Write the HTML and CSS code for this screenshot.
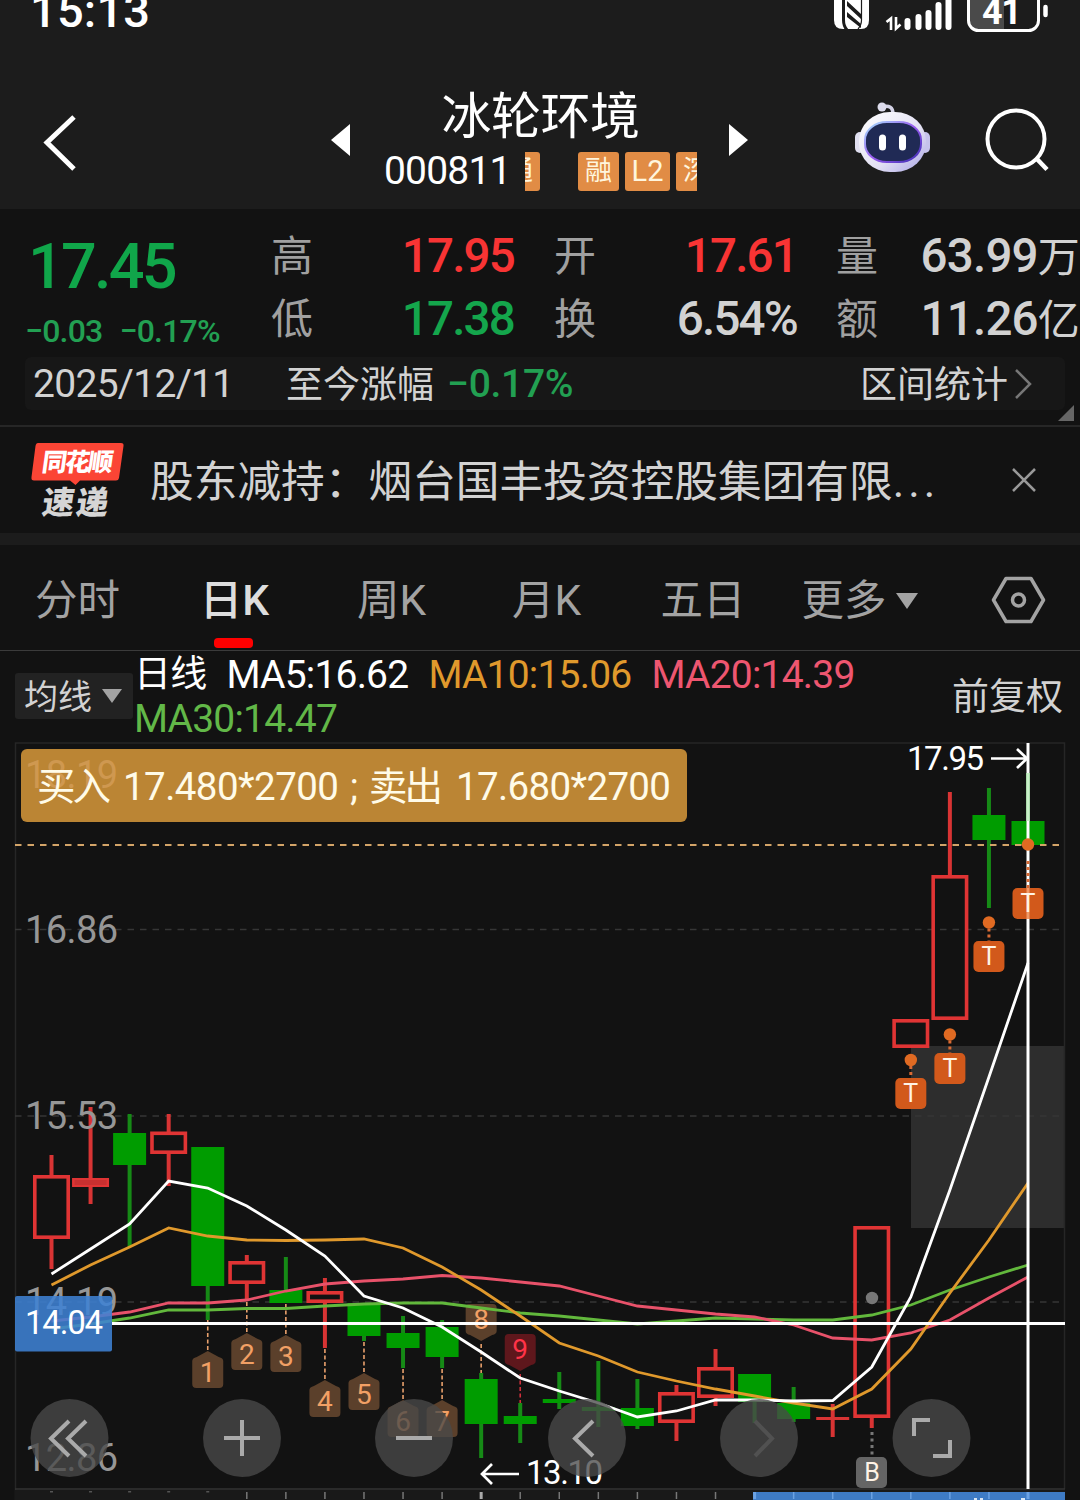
FILE: index.html
```html
<!DOCTYPE html>
<html lang="zh-CN">
<head>
    <meta charset="UTF-8">
    <meta name="viewport" content="width=device-width, initial-scale=1.0">
    <title>冰轮环境 000811</title>
    <link rel="stylesheet" href="styles.css">
</head>
<body>
    <div class="statusbar">
        <span class="clock">15:13</span>
        <svg class="status-icons" width="220" height="36" viewBox="830 0 220 36">
            <path d="M834 0V20Q834 29 843 29H861Q869 29 869 20V0Z" fill="#fff"/>
            <path d="M843.500 -2V20Q843.500 26 847 30" stroke="#1c1c1c" stroke-width="3" fill="none"/>
            <path d="M847 1L861 14V19L847 6ZM847 12L861 24V28L847 17Z" fill="#1c1c1c"/>
            <path d="M861.500 0V20Q861.500 25 858 29" stroke="#1c1c1c" stroke-width="1.200" fill="none"/>
            <path d="M886.500 22L891 18.500V30M896 17V28.500L900.500 24.500" stroke="#fff" stroke-width="2.600" fill="none"/>
            <path d="M907.500 21V27M918.500 17V27M928.500 13V27M938.500 5V27M948.500 -5V27" stroke="#fff" stroke-width="6" stroke-linecap="round"/>
            <path d="M969 0H1004V30H977Q969 30 969 21Z" fill="#4a4a4a"/>
            <rect x="968.500" y="-16" width="70" height="46.500" rx="10" fill="none" stroke="#fff" stroke-width="3"/>
            <path d="M1045.500 7V15" stroke="#fff" stroke-width="4.500" stroke-linecap="round"/>
            <text x="982" y="24" class="battery" textLength="40">41</text>
        </svg>
    </div>

    <header>
        <svg class="back" width="40" height="64" viewBox="40 110 40 64">
            <path d="M74 117L47 142.500L74 169" fill="none" stroke="#fff" stroke-width="5"/>
        </svg>
        <span class="prev"></span>
        <div class="stock">
            <h1>冰轮环境</h1>
            <div class="code">
                <span class="number">000811</span>
                <div class="tags">
                    <span class="tag tag-left">通</span>
                    <span class="tag">融</span>
                    <span class="tag tag-l2">L2</span>
                    <span class="tag">深</span>
                </div>
            </div>
        </div>
        <span class="next"></span>
        <svg class="robot" width="76" height="72" viewBox="854 101 76 72">
            <defs>
                <linearGradient id="shell" x1="0" y1="0" x2="1" y2="1">
                    <stop offset="0" stop-color="#fff"/>
                    <stop offset=".6" stop-color="#e2e0f3"/>
                    <stop offset="1" stop-color="#a9a4e6"/>
                </linearGradient>
                <linearGradient id="rim" x1="0" y1="0" x2="1" y2="1">
                    <stop offset="0" stop-color="#a7e4ff"/>
                    <stop offset=".5" stop-color="#9a5cf0"/>
                    <stop offset="1" stop-color="#3a2bb0"/>
                </linearGradient>
            </defs>
            <path d="M882 107Q893 104 893 114" fill="none" stroke="#d4d3e6" stroke-width="3.500"/>
            <circle cx="882" cy="107" r="4.500" fill="#dddced"/>
            <rect x="855" y="132" width="10" height="21" rx="5" fill="#e0dff0"/>
            <rect x="920" y="132" width="10" height="21" rx="5" fill="#c6c3ec"/>
            <rect x="859" y="112" width="67" height="60" rx="31" ry="29" fill="url(#shell)"/>
            <rect x="865" y="122" width="56" height="40" rx="22" ry="18" fill="#202a55" stroke="url(#rim)" stroke-width="2"/>
            <rect x="879" y="134.500" width="7" height="16" rx="3.500" fill="#fff"/>
            <rect x="899" y="134.500" width="7" height="16" rx="3.500" fill="#fff"/>
        </svg>
        <svg class="search" width="66" height="66" viewBox="984 106 66 66">
            <circle cx="1016" cy="138" r="28.500" fill="none" stroke="#fff" stroke-width="4"/>
            <path d="M1036 157L1047 168.500" stroke="#fff" stroke-width="4.500"/>
        </svg>
    </header>

    <section class="quote">
        <div class="quote-top">
            <div class="price-box">
                <div class="price">17.45</div>
                <div class="change"><span>−0.03</span><span>−0.17%</span></div>
            </div>
            <div class="stats">
                <span class="label">高</span><span class="value red">17.95</span>
                <span class="label">开</span><span class="value red">17.61</span>
                <span class="label">量</span><span class="value wide">63.99<i>万</i></span>
                <span class="label">低</span><span class="value green">17.38</span>
                <span class="label">换</span><span class="value">6.54%</span>
                <span class="label">额</span><span class="value wide">11.26<i>亿</i></span>
            </div>
        </div>
        <div class="range">
            <span class="date">2025/12/11</span>
            <span class="since">至今涨幅</span>
            <span class="since-value">−0.17%</span>
            <span class="range-link">区间统计</span>
            <svg width="20" height="32" viewBox="0 0 20 32"><path d="M2 2L16 16L2 30" fill="none" stroke="#777" stroke-width="2.500"/></svg>
        </div>
        <span class="corner"></span>
    </section>

    <section class="news">
        <svg class="news-logo" width="96" height="80" viewBox="30 440 96 80">
            <path d="M38 443H121Q124 443 123.500 446L119 478Q118.500 480.500 116 480.500H80L75.500 485L70 480.500H34Q31 480.500 31.500 477L35.500 446Q36 443 38 443Z" fill="#fb4535"/>
            <text transform="translate(41 471) skewX(-8)" class="logo-top" textLength="71">同花顺</text>
            <text transform="translate(41 514) skewX(-8)" class="logo-bottom" textLength="66">速递</text>
        </svg>
        <p>股东减持：烟台国丰投资控股集团有限<span class="dots">...</span></p>
        <svg class="close" width="28" height="28" viewBox="0 0 28 28"><path d="M3 3L25 25M25 3L3 25" stroke="#999" stroke-width="2.500"/></svg>
    </section>

    <nav>
        <a>分时</a>
        <a class="active">日K</a>
        <a>周K</a>
        <a>月K</a>
        <a>五日</a>
        <a class="more">更多</a>
        <svg width="56" height="50" viewBox="990 575 56 50">
            <path d="M1006 578.500H1031L1043.500 600L1031 621.500H1006L993.500 600Z" fill="none" stroke="#a3a3a3" stroke-width="3.500" stroke-linejoin="round"/>
            <circle cx="1018.500" cy="600" r="6" fill="none" stroke="#a3a3a3" stroke-width="3.500"/>
        </svg>
    </nav>

    <section class="averages">
        <span class="ma-button"><span>均线</span></span>
        <div class="ma-list">
            <span class="ma-name">日线</span>
            <span class="ma5">MA5:16.62</span>
            <span class="ma10">MA10:15.06</span>
            <span class="ma20">MA20:14.39</span>
            <span class="ma30">MA30:14.47</span>
        </div>
        <span class="adjust">前复权</span>
    </section>

    <svg id="chart" width="1080" height="758" viewBox="0 742 1080 758"></svg>

    <script>
        const step = 39.06;
        const firstX = 51.5;

        // type, high, body top, body bottom, low
        const candles = [
            ['r', 1155, 1175, 1239, 1269], ['r', 1107, 1178, 1187, 1204], ['g', 1114, 1133, 1165, 1247],
            ['r', 1114, 1131.5, 1154, 1186], ['g', 1147, 1147, 1286, 1320], ['r', 1255, 1261, 1284, 1300],
            ['g', 1257, 1290, 1303, 1303], ['r', 1278, 1291, 1303, 1348], ['g', 1303, 1303, 1336, 1341],
            ['g', 1316, 1333, 1348, 1368], ['g', 1320, 1327, 1357, 1368], ['g', 1373, 1379, 1424, 1458],
            ['g', 1403, 1416, 1424, 1443], ['g', 1372, 1399, 1403, 1409], ['g', 1361, 1407, 1411, 1427],
            ['g', 1379, 1408, 1426, 1429], ['r', 1385, 1392, 1423, 1441], ['r', 1349, 1367, 1398, 1406],
            ['g', 1374, 1374, 1402, 1423], ['g', 1387, 1403, 1419, 1422], ['r', 1404, 1417, 1420, 1437],
            ['r', 1226, 1226, 1418, 1428], ['r', 1019, 1019, 1048, 1048], ['r', 792, 875, 1020, 1020],
            ['g', 788, 815, 840, 908], ['g', 773, 821, 845, 845]
        ];

        const lines = {
            '#ffffff': [1274, 1249, 1224, 1181, 1188, 1206, 1230, 1256, 1296, 1308, 1327, 1352, 1378, 1391, 1403, 1417, 1411, 1400, 1400, 1401, 1400.5, 1367, 1297, 1190, 1077, 963],
            '#e0992c': [1285, 1265, 1247, 1228, 1236, 1240, 1240.5, 1240, 1239, 1248, 1267, 1290, 1316, 1343, 1356, 1372, 1381, 1389, 1396, 1403, 1409, 1389, 1349, 1293, 1240, 1183],
            '#e8526a': [1321, 1317, 1312, 1303, 1303, 1300, 1291, 1284, 1281, 1279, 1275.5, 1278, 1282, 1286, 1296, 1306, 1310, 1314, 1317, 1325, 1338, 1340, 1333, 1320, 1298, 1277],
            '#62b83c': [1329, 1324, 1318, 1310, 1310, 1308.5, 1308.5, 1306, 1304, 1303, 1303, 1308, 1313, 1316, 1320, 1324, 1321, 1318, 1319, 1320, 1320, 1315, 1305, 1290, 1277, 1265]
        };

        const xAt = i => firstX + step * i;
        let out = '';

        function line(x1, y1, x2, y2, color, width, dash) {
            out += `<path d="M${x1} ${y1}L${x2} ${y2}" stroke="${color}" stroke-width="${width}"${dash ? ` stroke-dasharray="${dash}"` : ''}/>`;
        }

        function rect(x, y, w, h, fill, rx) {
            out += `<rect x="${x}" y="${y}" width="${w}" height="${h}" rx="${rx || 0}" fill="${fill}"/>`;
        }

        function text(x, y, value, cls, length) {
            out += `<text x="${x}" y="${y}" class="${cls}"${length ? ` textLength="${length}"` : ''}>${value}</text>`;
        }

        // grid
        rect(911, 1046, 154, 182, '#2d2d2d');
        out += '<path d="M15.500 1500V743H1064.500V1489" fill="none" stroke="#262626" stroke-width="1.500"/>';
        line(15, 1489, 1065, 1489, '#333', 1.5);
        rect(15, 1490, 1050, 10, '#191919');
        [929.5, 1116, 1302].forEach(y => line(15, y, 1062, y, '#363636', 1.5, '6.500 6'));

        // candles
        candles.forEach(([type, high, top, bottom, low], i) => {
            const x = xAt(i);
            if (type === 'g') {
                line(x, high, x, low, '#168a16', 4);
                rect(x - 16.5, top, 33, bottom - top, '#009c00');
            } else {
                if (high < top) line(x, high, x, top + 1, '#d83434', 4);
                if (low > bottom) line(x, bottom - 1, x, low, '#d83434', 4);
                if (bottom - top < 5) {
                    rect(x - 16.5, top, 33, bottom - top, '#d83434');
                } else {
                    out += `<rect x="${x - 16.7}" y="${top + 1.8}" width="33.400" height="${bottom - top - 3.6}" fill="none" stroke="#e03434" stroke-width="3.600"/>`;
                }
            }
        });
        // second candle is nearly flat, its body is closed
        rect(xAt(1) - 16, 1180, 32, 5, '#c83030');

        text(25, 943, '16.86', 'axis', 93);
        text(25, 1129, '15.53', 'axis', 93);
        text(25, 1315, '14.19', 'axis', 93);
        text(25, 1471, '12.86', 'axis', 93);

        line(15, 845, 1062, 845, '#d3a468', 2, '6.500 6');

        // numbered signals: number, index, tip y, start y of the dashes
        [[1, 4, 1351, 1320], [2, 5, 1333, 1302], [3, 6, 1335, 1304], [4, 7, 1380, 1349], [5, 8, 1373, 1342], [6, 9, 1400, 1369], [7, 10, 1400, 1369]].forEach(([n, i, y, from]) => {
            const x = xAt(i);
            line(x, from, x, y, '#e8a06c', 1.6, '4 2.500');
            out += `<path d="M${x} ${y}L${x + 11} ${y + 6}Q${x + 15.5} ${y + 7} ${x + 15.5} ${y + 10}V${y + 33}Q${x + 15.5} ${y + 37} ${x + 11.5} ${y + 37}H${x - 11.5}Q${x - 15.5} ${y + 37} ${x - 15.5} ${y + 33}V${y + 10}Q${x - 15.5} ${y + 7} ${x - 11} ${y + 6}Z" fill="#5b402b"/>`;
            text(x, y + 31, n, 'signal');
        });
        [[8, 11, 1341, 1373, '#5b402b', '#e8a06c', 'signal'], [9, 12, 1371, 1403, '#5e171c', '#d0303c', 'signal nine']].forEach(([n, i, y, to, fill, stroke, cls]) => {
            const x = xAt(i);
            line(x, y + 3, x, to, stroke, 1.6, '4 2.500');
            out += `<path d="M${x} ${y}L${x + 11} ${y - 6}Q${x + 15.5} ${y - 7} ${x + 15.5} ${y - 10}V${y - 33}Q${x + 15.5} ${y - 37} ${x + 11.5} ${y - 37}H${x - 11.5}Q${x - 15.5} ${y - 37} ${x - 15.5} ${y - 33}V${y - 10}Q${x - 15.5} ${y - 7} ${x - 11} ${y - 6}Z" fill="${fill}"/>`;
            text(x, y - 12, n, cls);
        });

        // moving averages
        Object.entries(lines).reverse().forEach(([color, ys]) => {
            out += `<polyline points="${ys.map((y, i) => xAt(i) + ',' + y).join(' ')}" fill="none" stroke="${color}" stroke-width="2.800"/>`;
        });

        // crosshair
        line(1028, 743, 1028, 1489, '#fff', 3);
        line(112, 1323.5, 1065, 1323.5, '#fff', 3);
        line(1028, 773, 1028, 821, '#c9f0c9', 3);

        // trade marks
        [[22, 1060, 1078], [23, 1034.5, 1053], [24, 922.5, 941], [25, 844.5, 888]].forEach(([i, dot, y]) => {
            const x = xAt(i);
            out += `<circle cx="${x}" cy="${dot}" r="6.200" fill="#e06a22"/>`;
            line(x, i === 25 ? 861 : dot + 6, x, y, '#d86a34', 3, '3 3');
            rect(x - 15.5, y, 31, 31, '#d2591b', 5);
            if (i === 25) line(x, y, x, y + 31, '#f09a68', 3);
            text(x, y + 24, 'T', 'mark');
        });
        out += '<circle cx="872" cy="1298" r="6.200" fill="#777"/>';
        line(872, 1432, 872, 1457, '#777', 3, '3 3.500');
        rect(856, 1457, 31, 31, '#656565', 5);
        text(872, 1481, 'B', 'mark');

        text(907, 770, '17.95', 'extreme', 77);
        out += '<path d="M991 758.500H1027M1017 749L1027 758.500L1017 768M519 1474H482M492 1464L482 1474L492 1484" fill="none" stroke="#fff" stroke-width="2.700"/>';
        text(526, 1484, '13.10', 'extreme', 77);

        // price tag
        out += '<rect x="15" y="1296" width="97" height="55.500" rx="2" fill="#3e82d4" fill-opacity=".87"/>';
        text(25, 1334, '14.04', 'extreme', 78);

        // toolbar circles
        [69.5, 242, 414, 587, 759, 931.5].forEach(x => {
            out += `<circle cx="${x}" cy="1438" r="39" fill="#494949" fill-opacity=".78"/>`;
        });
        out += '<g fill="none" stroke="#aaa" stroke-width="4">'
            + '<path d="M69 1421L51 1438.500L69 1456M86 1421L68 1438.500L86 1456"/>'
            + '<path d="M224 1438H260M242 1420V1456M396 1438H432"/>'
            + '<path d="M593 1421L575 1438.500L593 1456"/>'
            + '<path d="M914 1436V1420H930M950 1440V1456H933"/>'
            + '<path d="M755 1421L772 1438.500L755 1456" stroke="#515151"/></g>';

        // time axis
        for (let i = 0; i < 26; i++) {
            const x = xAt(i);
            if (i < 5) line(x, 1491, x, 1492.5, '#555', 3);
            else line(x, 1492, x, 1499, i === 11 ? '#aaa' : '#777', i === 11 ? 3 : 1.5);
        }
        rect(753, 1492, 312, 8, '#3e7bc5');
        for (let i = 18; i < 26; i++) line(xAt(i), 1492, xAt(i), 1499, '#6ba2e4', i === 18 || i === 25 ? 3 : 1.5);
        rect(974, 1498, 3, 2, '#d9e6f5');
        rect(980, 1498, 3, 2, '#d9e6f5');
        rect(1021, 1498, 4, 2, '#d9e6f5');

        // order tooltip
        out += '<rect x="21" y="749" width="666" height="73" rx="6" fill="#bb8534"/>';
        text(25, 788, '18.19', 'axis axis-under', 93);
        text(37, 800, '买入', 'tip', 74);
        text(123, 800, '17.480*2700', 'tip', 216);
        text(350, 800, ';', 'tip');
        text(369, 800, '卖出', 'tip', 74);
        text(456, 800, '17.680*2700', 'tip', 215);

        document.getElementById('chart').innerHTML = out;
    </script>
</body>
</html>
```
FILE: styles.css
```css
body {
    font-family: Roboto, "Noto Sans CJK SC", sans-serif;
    margin: 0;
    width: 1080px;
    height: 1500px;
    overflow: hidden;
    background-color: #121212;
    color: #d2d2d2;
}

h1, p {
    margin: 0;
    font-weight: normal;
}

svg {
    display: block;
    flex: none;
}

.statusbar {
    display: flex;
    justify-content: space-between;
    height: 70px;
    padding: 0 30px;
    background-color: #1c1c1c;
    color: #fff;
}

.clock {
    font-size: 47px;
    font-weight: 500;
    line-height: 54px;
    letter-spacing: 0.2px;
    margin-top: -16px;
}

.battery {
    font-size: 36px;
    font-weight: bold;
    fill: #fff;
}

header {
    display: flex;
    align-items: center;
    height: 139px;
    background-color: #1c1c1c;
    color: #fff;
}

.back {
    margin-left: 40px;
    margin-top: 5px;
}

.prev, .next {
    border-top: 16px solid transparent;
    border-bottom: 16px solid transparent;
}

.prev {
    margin-left: 251px;
    border-right: 19px solid #fff;
}

.next {
    border-left: 19px solid #fff;
}

.stock {
    width: 313px;
    margin: 0 32px 0 34px;
}

.stock h1 {
    font-size: 50px;
    line-height: 60px;
    text-align: center;
    letter-spacing: -0.5px;
    margin-top: 3px;
}

.code {
    display: flex;
    align-items: center;
    height: 48px;
}

.number {
    font-size: 39px;
    width: 141px;
    letter-spacing: -0.8px;
}

.tags {
    display: flex;
    gap: 6px;
    width: 172px;
    overflow: hidden;
}

.tag {
    flex: none;
    width: 41px;
    height: 39px;
    box-sizing: border-box;
    border-radius: 3px;
    background-color: #e18c45;
    color: #fff5dd;
    font-size: 27px;
    line-height: 38px;
    text-align: center;
}

.tag-left {
    margin-left: -26px;
    margin-right: 32px;
}

.tag-l2 {
    width: 45px;
    font-size: 29px;
}

.robot {
    margin-left: 106px;
    margin-top: -5px;
}

.search {
    margin-left: 54px;
}

.quote {
    position: relative;
    height: 216px;
    border-bottom: 2px solid #262626;
}

.quote-top {
    display: flex;
    height: 148px;
}

.price-box {
    width: 271px;
    color: #10a64a;
    font-weight: 500;
}

.price {
    font-size: 63px;
    line-height: 76px;
    margin: 20px 0 0 28px;
    letter-spacing: -2.8px;
}

.change {
    display: flex;
    gap: 17px;
    margin-left: 25px;
    font-size: 32px;
    line-height: 52px;
    letter-spacing: -0.8px;
    color: #22a052;
    white-space: nowrap;
}

.stats {
    display: grid;
    grid-template-columns: 42px 201px 82px 201px 81px 201px;
    grid-template-rows: 63px 63px;
    padding-top: 16px;
    width: 809px;
    font-size: 42px;
    line-height: 63px;
    white-space: nowrap;
}

.stats .label {
    color: #a0a0a0;
    text-align: right;
}

.stats .value {
    font-size: 47.5px;
    font-weight: 500;
    letter-spacing: -1.8px;
    text-align: right;
}

.stats .wide {
    letter-spacing: -0.8px;
}

.stats i {
    font-size: 42px;
    font-style: normal;
    font-weight: normal;
}

.stats .red {
    color: #f83434;
}

.stats .green {
    color: #14a64c;
}

.range {
    display: flex;
    align-items: center;
    height: 53px;
    margin: 0 15px 0 25px;
    padding: 0 31px 0 8px;
    border-radius: 6px;
    background-color: #171717;
    font-size: 37px;
}

.date {
    width: 253px;
    font-size: 39px;
    letter-spacing: -0.7px;
}

.since, .range-link {
    margin-top: -4px;
}

.since-value {
    margin-left: 13px;
    font-size: 39px;
    font-weight: 500;
    letter-spacing: -0.3px;
    color: #22a052;
}

.range-link {
    margin-left: auto;
    margin-right: 6px;
}

.corner {
    position: absolute;
    right: 6px;
    bottom: 4px;
    border-left: 16px solid transparent;
    border-bottom: 16px solid #666;
}

.news {
    display: flex;
    align-items: center;
    height: 106px;
    border-bottom: 12px solid #1c1c1c;
}

.news-logo {
    margin-left: 30px;
}

.logo-top, .logo-bottom {
    font-weight: 900;
    font-size: 25px;
    fill: #fff;
}

.logo-bottom {
    font-size: 32px;
    fill: #d5d5d5;
}

.news p {
    margin: -4px 0 0 24px;
    width: 860px;
    font-size: 43.7px;
    white-space: nowrap;
}

.dots {
    letter-spacing: 4px;
}

.close {
    margin-right: 42px;
}

nav {
    display: flex;
    align-items: center;
    height: 105px;
    border-bottom: 1px solid #3b3b3b;
    font-size: 42.5px;
    color: #a3a3a3;
    white-space: nowrap;
}

nav a {
    position: relative;
    left: -1px;
    width: 157px;
    padding-top: 7px;
    line-height: 98px;
    text-align: center;
}

nav a:nth-child(4), nav a:nth-child(5), nav a:nth-child(6) {
    left: -3px;
}

nav a:nth-child(5) {
    width: 156px;
}

nav .active {
    color: #ddd;
    font-weight: 500;
}

.active::after {
    content: "";
    position: absolute;
    left: 58px;
    bottom: 2px;
    width: 39px;
    height: 10px;
    border-radius: 4px;
    background-color: #f00;
}

.more::after {
    content: "";
    display: inline-block;
    margin-left: 9px;
    vertical-align: 6px;
    border-left: 11px solid transparent;
    border-right: 11px solid transparent;
    border-top: 16px solid #a3a3a3;
}

nav svg {
    margin-left: 49px;
    margin-top: 4px;
}

.averages {
    display: flex;
    align-items: center;
    height: 91px;
}

.ma-button {
    display: flex;
    align-items: center;
    width: 109px;
    height: 46px;
    margin: -2px 1px 0 15px;
    padding-left: 9px;
    border-radius: 3px;
    background-color: #222;
    font-size: 34px;
    white-space: nowrap;
}

.ma-button span {
    margin-top: -2px;
}

.ma-button::after {
    content: "";
    margin-left: 10px;
    border-left: 10px solid transparent;
    border-right: 10px solid transparent;
    border-top: 14px solid #a3a3a3;
}

.ma-list {
    display: flex;
    flex-wrap: wrap;
    column-gap: 20px;
    width: 780px;
    font-size: 39px;
    line-height: 44px;
    letter-spacing: -0.8px;
}

.ma-name {
    font-size: 37px;
}

.ma-name, .ma5 {
    color: #fff;
}

.ma10 {
    color: #e0992c;
}

.ma20 {
    color: #ee5670;
}

.ma30 {
    color: #62b848;
}

.adjust {
    margin: -5px 0 0 38px;
    font-size: 37px;
    white-space: nowrap;
}

.axis {
    font-size: 38px;
    fill: #969696;
}

.axis-under {
    fill: #cf9850;
}

.extreme {
    font-size: 33px;
    fill: #fff;
}

.signal {
    font-size: 28px;
    fill: #f2a065;
    text-anchor: middle;
}

.nine {
    fill: #ff3348;
}

.mark {
    font-size: 25px;
    fill: #fff3e6;
    text-anchor: middle;
}

.tip {
    font-size: 38.5px;
    fill: #fffbe8;
}
```
